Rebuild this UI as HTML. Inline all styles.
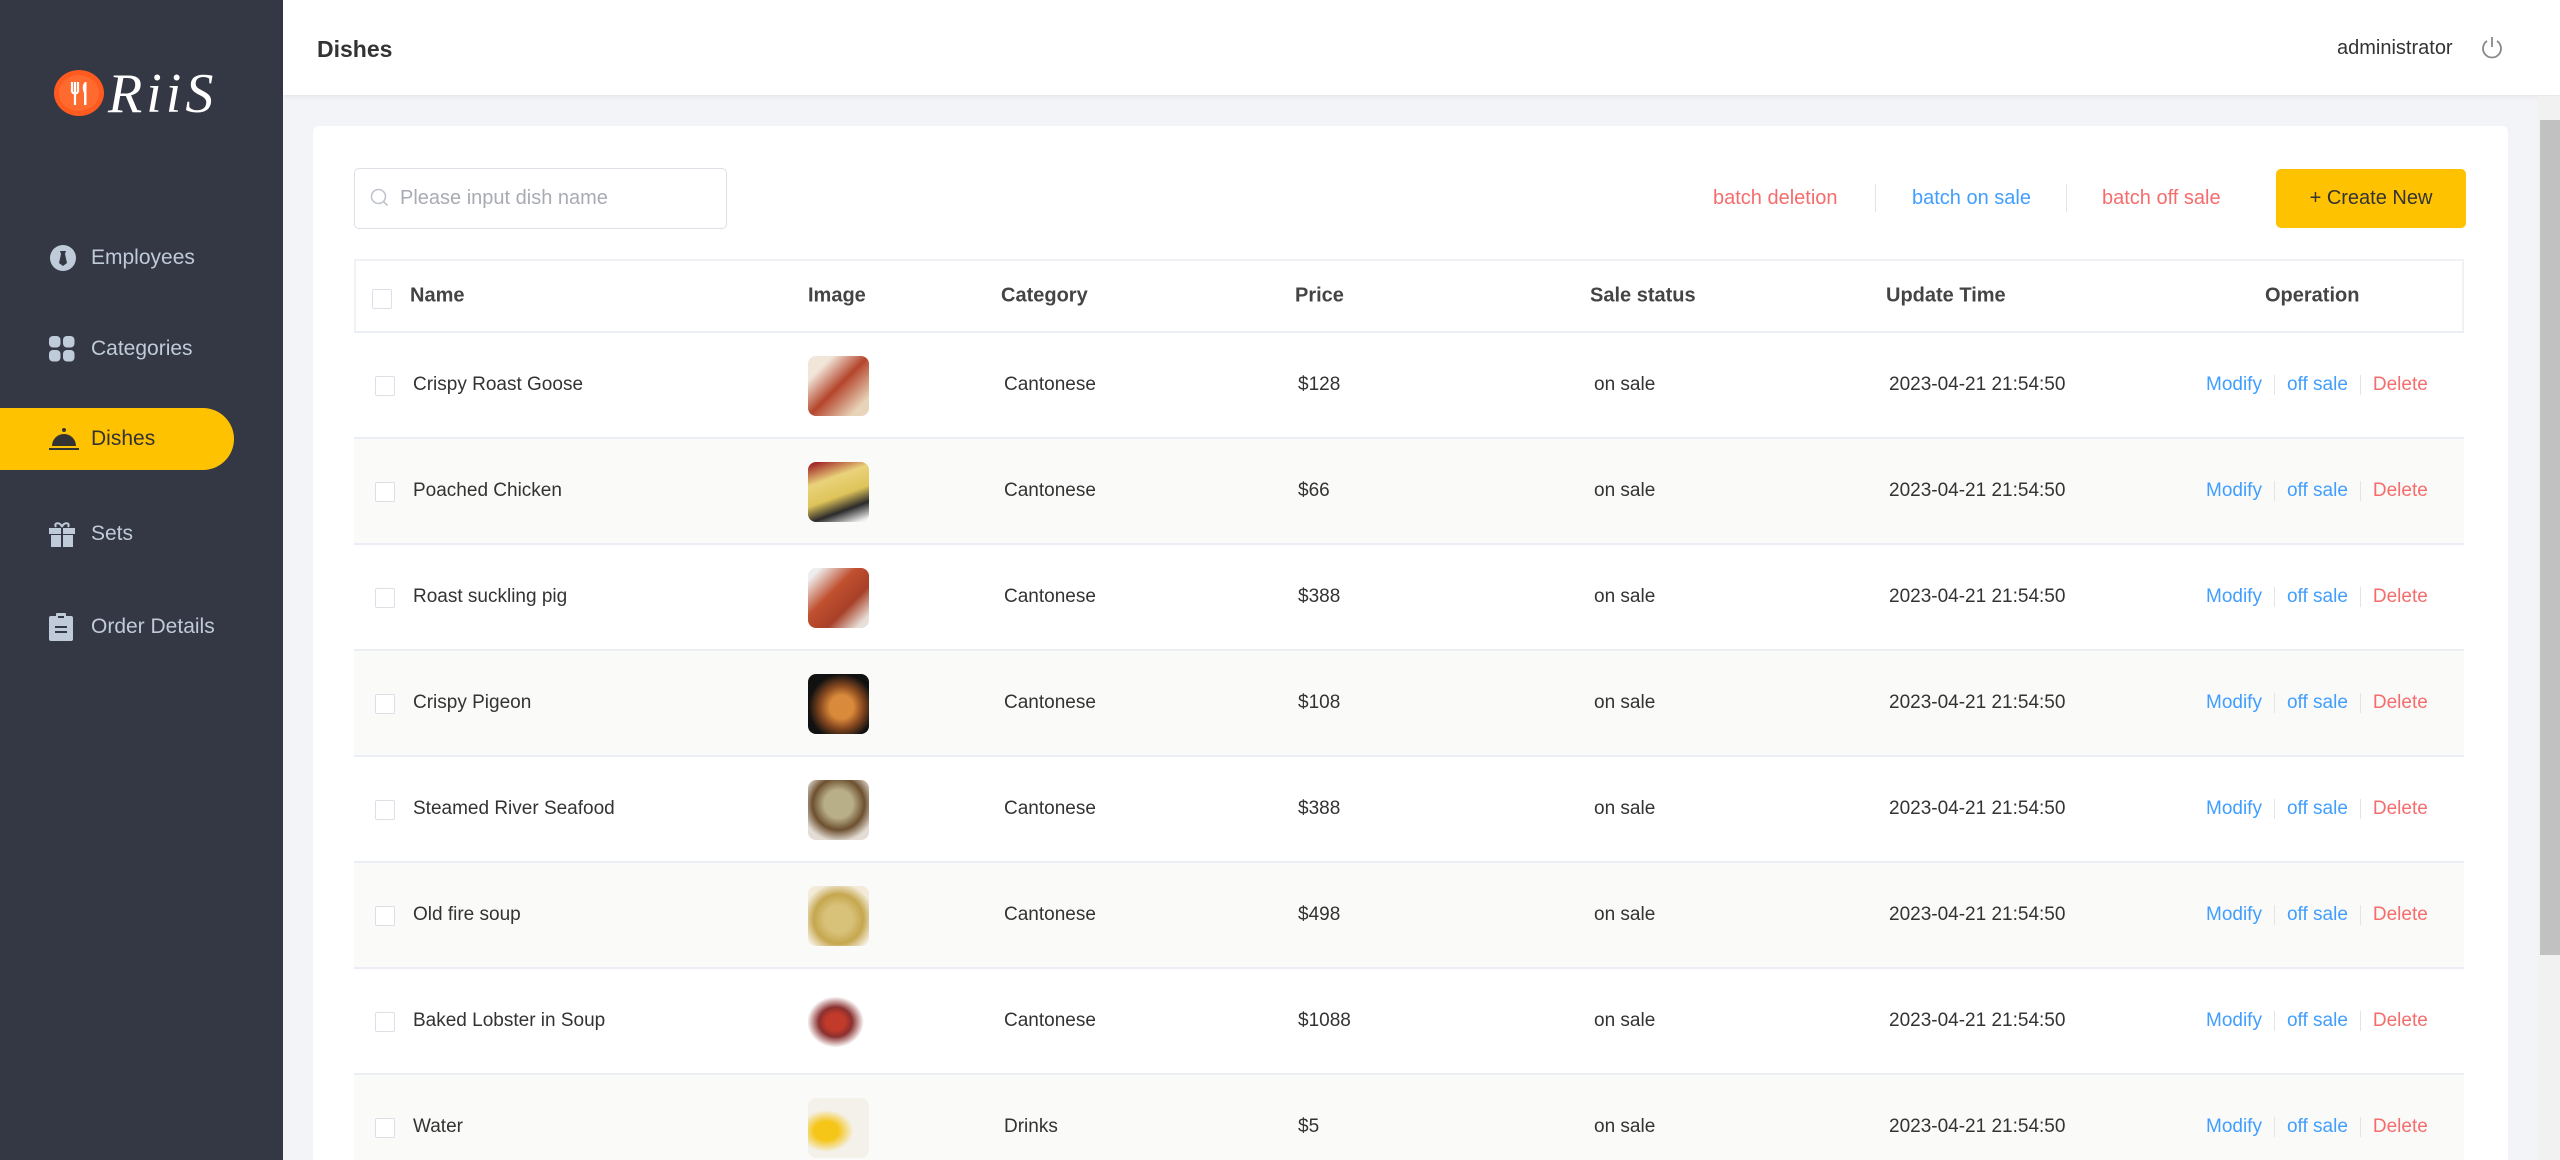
<!DOCTYPE html>
<html><head><meta charset="utf-8"><style>
*{box-sizing:border-box;margin:0;padding:0}
html{width:2560px;height:1160px;overflow:hidden}
body{width:2560px;height:1160px;overflow:hidden;background:#f3f4f7;font-family:"Liberation Sans",sans-serif;position:relative}
.side{position:absolute;left:0;top:0;width:283px;height:1160px;background:#343744}
.menu{position:absolute;left:0;width:283px;height:62px;display:flex;align-items:center;color:#bfcbd9;font-size:21px}
.menu svg{position:absolute;left:49px}
.menu span{position:absolute;left:91px}
.menu.act{width:234px;background:#ffc200;border-radius:0 31px 31px 0;color:#333}
.hdr{position:absolute;left:283px;top:0;width:2277px;height:95px;background:#fff;box-shadow:0 2px 4px rgba(0,0,0,.06)}
.card{position:absolute;left:313px;top:126px;width:2195px;height:1034px;background:#fff;border-radius:6px 6px 0 0}
.sb{position:absolute;left:2538px;top:96px;width:22px;height:1064px;background:#f1f1f1}
.sb div{position:absolute;left:2px;top:24px;width:20px;height:835px;background:#c1c1c1}
.t{position:absolute;white-space:nowrap}
.row{position:absolute;left:354px;width:2110px;height:106px;border-bottom:2px solid #ebeef5;font-size:19px;color:#333}
.row .t{top:50%;transform:translateY(-50%)}
.cb{position:absolute;width:20px;height:20px;border:1px solid #dcdfe6;border-radius:2px;background:#fff}
.img{position:absolute;left:454px;width:61px;height:60px;border-radius:8px;top:23px}
.sep{display:inline-block;width:1px;height:20px;background:#e4e4e4;vertical-align:middle;margin:0 12px}
</style></head><body>
<div class="side">
  <svg style="position:absolute;left:54px;top:70px" width="50" height="46"><ellipse cx="25" cy="23" rx="25" ry="23" fill="#ff5a1f"/><ellipse cx="25" cy="23" rx="20" ry="18" fill="#ff6b2e"/><path d="M18 12v10M21 12v10M24 12v10M18 22q3 3 6 0M21 22v13" stroke="#fff" stroke-width="2.2" fill="none"/><path d="M31 12q-4 4-1 11v12h2.5V12z" fill="#fff"/></svg>
  <div class="t" style="left:108px;top:62px;font-family:'Liberation Serif',serif;font-style:italic;font-size:56px;color:#fff;letter-spacing:4px">RiiS</div>
  <div class="menu" style="top:227px"><svg width="28" height="28" viewBox="0 0 28 28"><circle cx="14" cy="14" r="13" fill="#bfcbd9"/><path d="M11 7h6l-1 3 2 9-4 3-4-3 2-9z" fill="#343744"/></svg><span>Employees</span></div>
  <div class="menu" style="top:318px"><svg width="26" height="26" viewBox="0 0 26 26"><rect x="0" y="0" width="11.5" height="11.5" rx="4" fill="#bfcbd9"/><rect x="14" y="0" width="11.5" height="11.5" rx="4" fill="#bfcbd9"/><rect x="0" y="14" width="11.5" height="11.5" rx="4" fill="#bfcbd9"/><rect x="14" y="14" width="11.5" height="11.5" rx="4" fill="#bfcbd9"/></svg><span>Categories</span></div>
  <div class="menu act" style="top:408px"><svg width="30" height="24" viewBox="0 0 30 24"><circle cx="15" cy="3" r="2" fill="#333"/><path d="M3 19a12 12 0 0 1 24 0z" fill="#333"/><rect x="0" y="21" width="30" height="2" fill="#333"/></svg><span>Dishes</span></div>
  <div class="menu" style="top:503px"><svg width="26" height="26" viewBox="0 0 26 26"><path d="M7 6c-3-5 5-5 6 0c1-5 9-5 6 0" stroke="#bfcbd9" stroke-width="2" fill="none"/><rect x="0" y="7" width="26" height="6" fill="#bfcbd9"/><rect x="2" y="14" width="22" height="12" fill="#bfcbd9"/><rect x="12" y="7" width="2" height="19" fill="#343744"/></svg><span>Sets</span></div>
  <div class="menu" style="top:596px"><svg width="24" height="28" viewBox="0 0 24 28"><rect x="0" y="3" width="24" height="25" rx="2" fill="#bfcbd9"/><rect x="7" y="0" width="10" height="6" rx="1" fill="#bfcbd9"/><rect x="9" y="3" width="6" height="2" fill="#343744"/><rect x="6" y="13" width="12" height="2" fill="#343744"/><rect x="6" y="18" width="12" height="2" fill="#343744"/></svg><span>Order Details</span></div>
</div>
<div class="hdr">
  <div class="t" style="left:34px;top:36px;font-size:23px;font-weight:bold;color:#333">Dishes</div>
  <div class="t" style="left:2054px;top:37px;font-size:20px;color:#333">administrator</div>
  <svg style="position:absolute;left:2198px;top:36px" width="22" height="24" viewBox="0 0 22 24"><path d="M6 5a9 9 0 1 0 10 0" stroke="#888" stroke-width="1.8" fill="none"/><path d="M11 1v10" stroke="#888" stroke-width="1.8"/></svg>
</div>
<div class="card"></div>
<div class="sb"><div></div></div>
<div style="position:absolute;left:354px;top:168px;width:373px;height:61px;border:1px solid #dcdfe6;border-radius:5px"></div>
<svg style="position:absolute;left:370px;top:188px" width="20" height="20" viewBox="0 0 20 20"><circle cx="8.5" cy="8.5" r="7" stroke="#c0c4cc" stroke-width="1.6" fill="none"/><path d="M13.5 13.5l4 4" stroke="#c0c4cc" stroke-width="1.6"/></svg>
<div class="t" style="left:400px;top:187px;font-size:20px;color:#a8abb2">Please input dish name</div>
<div class="t" style="left:1713px;top:187px;font-size:20px;color:#f56c6c">batch deletion</div>
<div style="position:absolute;left:1875px;top:184px;width:1px;height:28px;background:#e4e4e4"></div>
<div class="t" style="left:1912px;top:187px;font-size:20px;color:#419eff">batch on sale</div>
<div style="position:absolute;left:2066px;top:184px;width:1px;height:28px;background:#e4e4e4"></div>
<div class="t" style="left:2102px;top:187px;font-size:20px;color:#f56c6c">batch off sale</div>
<div style="position:absolute;left:2276px;top:169px;width:190px;height:59px;background:#ffc200;border-radius:5px;font-size:20px;color:#333;text-align:center;line-height:59px">+ Create New</div>
<div style="position:absolute;left:354px;top:259px;width:2110px;height:901px;border:2px solid #f0f1f4;border-bottom:none"></div>
<div class="row" style="top:260px;height:73px;font-weight:bold;font-size:20px;color:#444">
  <div class="cb" style="left:18px;top:29px"></div>
  <div class="t" style="left:56px">Name</div><div class="t" style="left:454px">Image</div><div class="t" style="left:647px">Category</div><div class="t" style="left:941px">Price</div><div class="t" style="left:1236px">Sale status</div><div class="t" style="left:1532px">Update Time</div><div class="t" style="left:1911px">Operation</div>
</div>
<div id="rows" style="position:absolute;left:0;top:0;width:2560px;height:1160px;overflow:hidden"></div>
<script>
var d=[["Crispy Roast Goose","$128","Cantonese","linear-gradient(135deg,#f2e6da 20%,#b4452c 50%,#e8d4b8 85%)"],["Poached Chicken","$66","Cantonese","linear-gradient(160deg,#a32a2a 5%,#e9d27a 30%,#dfc45a 55%,#2b2a2a 75%,#eee 95%)"],["Roast suckling pig","$388","Cantonese","linear-gradient(135deg,#eee 10%,#c0502f 40%,#a84028 65%,#e8e0d8 90%)"],["Crispy Pigeon","$108","Cantonese","radial-gradient(circle at 55% 55%,#d98a3a 25%,#8a4a20 45%,#111 70%)"],["Steamed River Seafood","$388","Cantonese","radial-gradient(circle at 50% 40%,#b8ae88 30%,#6d5030 55%,#e3ddd5 80%)"],["Old fire soup","$498","Cantonese","radial-gradient(circle at 50% 55%,#d8c27a 30%,#c5a74e 55%,#f3ead8 80%)"],["Baked Lobster in Soup","$1088","Cantonese","radial-gradient(ellipse at 45% 50%,#c23a2a 20%,#8a3030 35%,#fff 60%)"],["Water","$5","Drinks","radial-gradient(ellipse at 30% 55%,#f5c518 20%,#f4f1ea 45%)"]];
var h="";d.forEach(function(r,i){var top=333+i*106;h+='<div class="row" style="top:'+top+'px;background:'+(i%2?'#fafaf8':'#fff')+'"><div class="cb" style="left:21px;top:43px"></div><div class="t" style="left:59px">'+r[0]+'</div><div class="img" style="background:'+r[3]+'"></div><div class="t" style="left:650px">'+r[2]+'</div><div class="t" style="left:944px">'+r[1]+'</div><div class="t" style="left:1240px">on sale</div><div class="t" style="left:1535px">2023-04-21 21:54:50</div><div class="t" style="left:1852px;color:#419eff">Modify<span class="sep"></span>off sale<span class="sep"></span><span style="color:#f56c6c">Delete</span></div></div>'});
document.getElementById("rows").innerHTML=h;
</script>
</body></html>
